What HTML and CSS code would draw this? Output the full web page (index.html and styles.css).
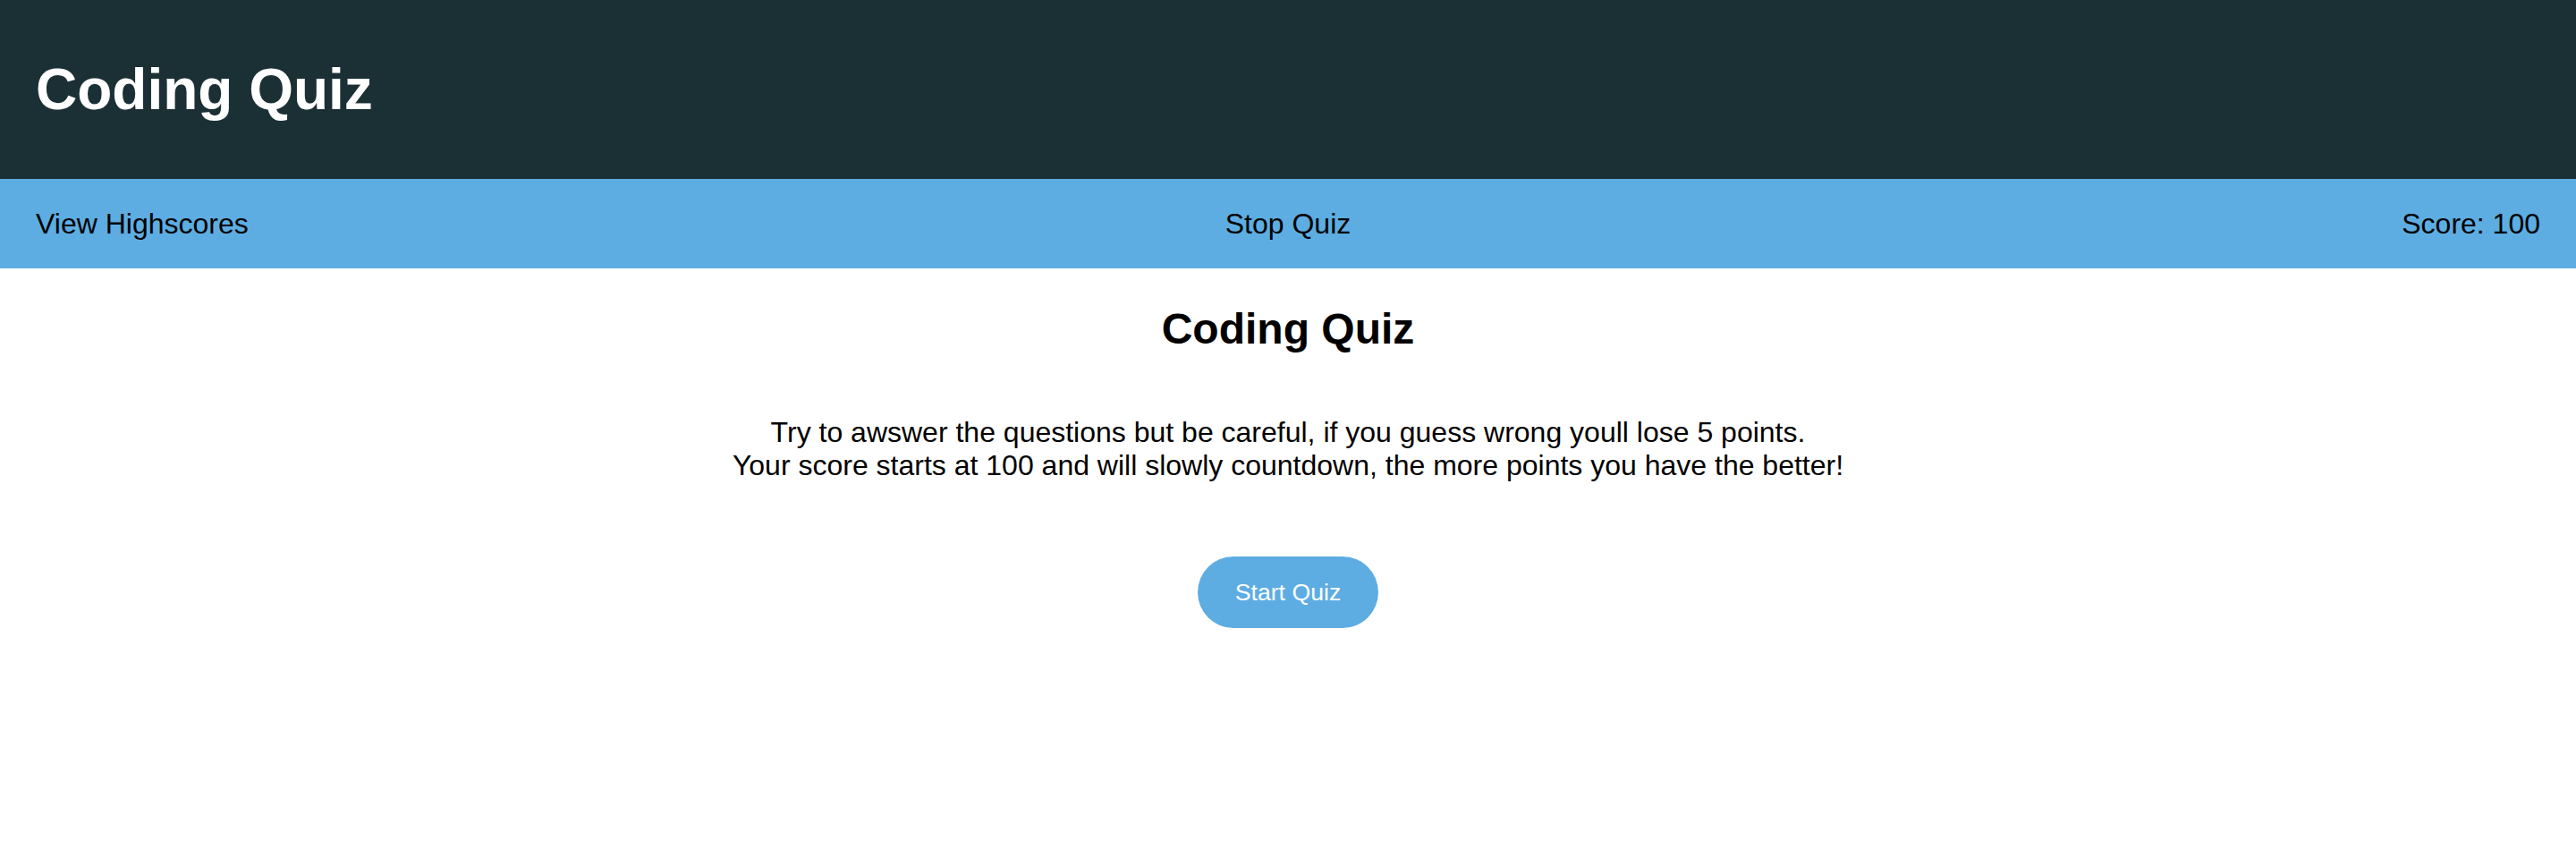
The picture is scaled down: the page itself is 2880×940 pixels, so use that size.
FILE: index.html
```html
<!DOCTYPE html>
<html lang="en">
<head>
<meta charset="utf-8">
<title>Coding Quiz</title>
<link rel="stylesheet" href="styles.css">
</head>
<body>
<header class="site-header">
  <h1 class="site-title">Coding Quiz</h1>
</header>
<nav class="nav-bar">
  <a class="nav-link nav-left" href="#">View Highscores</a>
  <a class="nav-link nav-center" href="#">Stop Quiz</a>
  <span class="nav-score">Score: 100</span>
</nav>
<main class="quiz">
  <h2 class="quiz-title">Coding Quiz</h2>
  <p class="quiz-intro">Try to awswer the questions but be careful, if you guess wrong youll lose 5 points.<br>Your score starts at 100 and will slowly countdown, the more points you have the better!</p>
  <button class="start-btn" type="button">Start Quiz</button>
</main>
</body>
</html>
```

FILE: styles.css
```css
html, body {
  margin: 0;
  padding: 0;
  background: #ffffff;
  font-family: "Liberation Sans", Arial, Helvetica, sans-serif;
  color: #000000;
}

.site-header {
  height: 200px;
  background: #1b3034;
  display: flex;
  align-items: center;
  padding: 0 40px;
  box-sizing: border-box;
}

.site-title {
  margin: 0;
  color: #ffffff;
  font-size: 64px;
  font-weight: bold;
  line-height: normal;
}

.nav-bar {
  height: 100px;
  background: #5dade2;
  display: grid;
  grid-template-columns: 1fr auto 1fr;
  align-items: center;
  padding: 0 40px;
  box-sizing: border-box;
  font-size: 32px;
}

.nav-link {
  color: #000000;
  text-decoration: none;
}

.nav-left {
  justify-self: start;
}

.nav-center {
  justify-self: center;
}

.nav-score {
  justify-self: end;
}

.quiz {
  display: flex;
  flex-direction: column;
  align-items: center;
  text-align: center;
}

.quiz-title {
  margin: 40px 0 0;
  font-size: 48px;
  font-weight: bold;
  line-height: normal;
}

.quiz-intro {
  margin: 70px 0 0;
  font-size: 32px;
  line-height: normal;
}

.start-btn {
  margin-top: 83px;
  background: #5dade2;
  color: #ffffff;
  border: none;
  border-radius: 40px;
  padding: 24.5px 41.5px;
  font-family: "Liberation Sans", Arial, Helvetica, sans-serif;
  font-size: 26.67px;
  line-height: normal;
  cursor: pointer;
}
```
